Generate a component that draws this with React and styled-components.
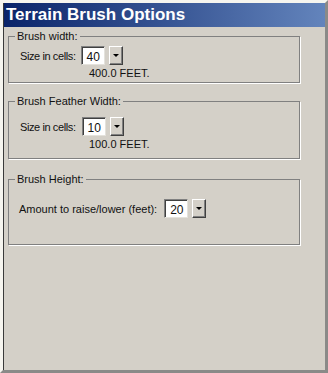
import React from "react";
import styled, { createGlobalStyle } from "styled-components";

const Global = createGlobalStyle`
  html, body { margin: 0; padding: 0; background: #d4d0c8; }
  * { box-sizing: border-box; }
`;

const Window = styled.div`
  width: 328px;
  height: 373px;
  background: #d4d0c8;
  border-top: 3px solid #f6f5ef;
  border-left: 3px solid #f6f5ef;
  border-right: 3px solid #8a8a88;
  border-bottom: 3px solid #8a8a88;
  box-shadow: inset 1px 0 0 #3a3a3a;
  font-family: "Liberation Sans", Arial, sans-serif;
  font-size: 11px;
  color: #111;
`;

const TitleBar = styled.div`
  height: 24px;
  margin-left: 1px;
  background: linear-gradient(to right, #0a246a, #6384bc);
  color: #fff;
  font-weight: bold;
  font-size: 17px;
  display: flex;
  align-items: center;
  padding-left: 2px;
`;

const Body = styled.div`
  display: flex;
  flex-direction: column;
  padding: 3px 0 0 5px;
  width: 297px;
`;

const Group = styled.fieldset`
  margin: 0 0 ${(p) => p.$gap || 0}px 0;
  padding: 0 0 0 10px;
  height: ${(p) => p.$h}px;
  border: 1px solid #808080;
  box-shadow: 1px 1px 0 #fff;
  display: flex;
  flex-direction: column;
`;

const Legend = styled.legend`
  padding: 0 2px;
  margin-left: -4px;
  line-height: 13px;
`;

const Row = styled.div`
  display: flex;
  align-items: center;
  margin-top: ${(p) => p.$top}px;
  padding-left: ${(p) => p.$indent || 0}px;
`;

const Label = styled.span`
  margin-right: ${(p) => p.$gap}px;
  letter-spacing: ${(p) => (p.$tight ? "-0.4px" : "0")};
`;

const Input = styled.div`
  width: 24px;
  height: 19px;
  background: #fff;
  border: 1px solid #808080;
  border-right-color: #e4e2dc;
  border-bottom-color: #e4e2dc;
  box-shadow: inset 1px 1px 0 #404040;
  padding: 3px 0 0 5px;
  font-size: 12px;
`;

const DropButton = styled.div`
  width: 14px;
  height: 19px;
  margin-left: 4px;
  background: #d4d0c8;
  border: 1px solid;
  border-color: #fff #404040 #404040 #fff;
  box-shadow: inset -1px -1px 0 #808080;
  display: flex;
  align-items: center;
  justify-content: center;
  &::after {
    content: "";
    border-left: 3px solid transparent;
    border-right: 3px solid transparent;
    border-top: 3px solid #000;
  }
`;

const Feet = styled.div`
  margin-top: 2px;
  padding-left: 70px;
`;

function SizeRow({ value, gap, indent, top }) {
  return (
    <Row $top={top} $indent={indent}>
      <Label $gap={gap} $tight>Size in cells:</Label>
      <Input>{value}</Input>
      <DropButton />
    </Row>
  );
}

export default function App() {
  return (
    <>
      <Global />
      <Window>
        <TitleBar>Terrain Brush Options</TitleBar>
        <Body>
          <Group $h={53} $gap={12}>
            <Legend>Brush width:</Legend>
            <SizeRow value="40" gap={5} indent={1} top={3} />
            <Feet>400.0 FEET.</Feet>
          </Group>
          <Group $h={64} $gap={14}>
            <Legend>Brush Feather Width:</Legend>
            <SizeRow value="10" gap={6} indent={1} top={9} />
            <Feet>100.0 FEET.</Feet>
          </Group>
          <Group $h={72}>
            <Legend>Brush Height:</Legend>
            <Row $top={13}>
              <Label $gap={7}>Amount to raise/lower (feet):</Label>
              <Input>20</Input>
              <DropButton />
            </Row>
          </Group>
        </Body>
      </Window>
    </>
  );
}
